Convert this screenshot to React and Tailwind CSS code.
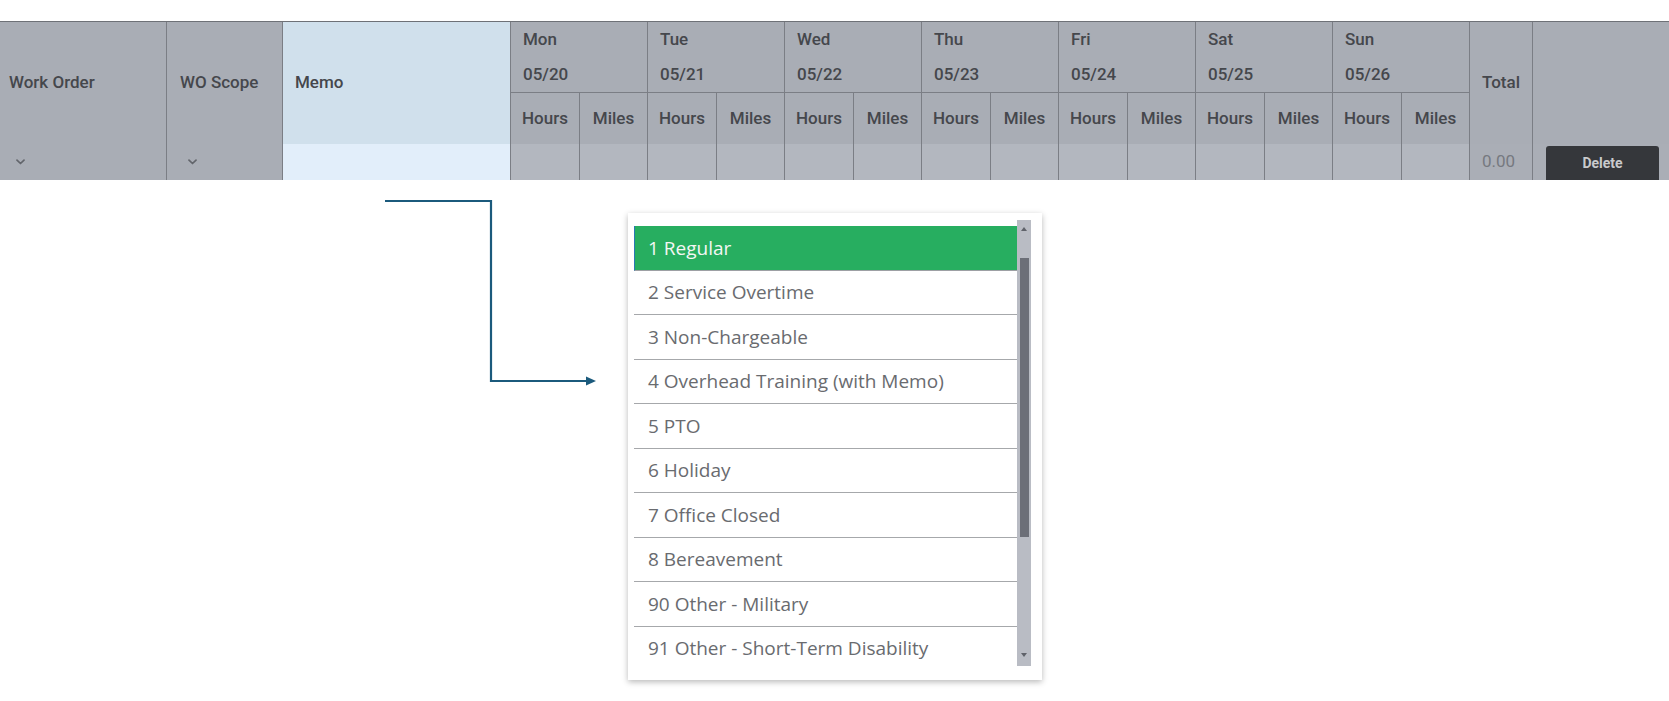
import React from "react";

const days = [
  { name: "Mon", date: "05/20" },
  { name: "Tue", date: "05/21" },
  { name: "Wed", date: "05/22" },
  { name: "Thu", date: "05/23" },
  { name: "Fri", date: "05/24" },
  { name: "Sat", date: "05/25" },
  { name: "Sun", date: "05/26" },
];

const payTypes = [
  "1 Regular",
  "2 Service Overtime",
  "3 Non-Chargeable",
  "4 Overhead Training (with Memo)",
  "5 PTO",
  "6 Holiday",
  "7 Office Closed",
  "8 Bereavement",
  "90 Other - Military",
  "91 Other - Short-Term Disability",
];

const Chevron = () => (
  <svg width="9" height="6" viewBox="0 0 9 6" fill="none">
    <path d="M1 1.2l3.5 3.3L8 1.2" stroke="#62656b" strokeWidth="1.7" strokeLinecap="round" strokeLinejoin="round" />
  </svg>
);

const cell = "border-r border-[#7b7e85]";

const TimesheetGrid = () => (
  <div
    className="mt-[21px] border-t border-[#6e7177] grid grid-cols-[167px_116px_228px_repeat(7,69px_68px)_63px_1fr] grid-rows-[71px_51px_36px] text-[17px] text-[#45474c] font-medium"
    style={{ fontFamily: "Roboto, 'Liberation Sans', sans-serif" }}
  >
    <div className={`${cell} row-span-2 bg-[#a9adb5] flex items-center pl-[9px]`}>Work Order</div>
    <div className={`${cell} row-span-2 bg-[#a9adb5] flex items-center pl-[13px]`}>WO Scope</div>
    <div className={`${cell} row-span-2 bg-[#d0e0ec] flex items-center pl-3`}>Memo</div>
    {days.map((d) => (
      <div key={d.name} className={`${cell} col-span-2 bg-[#a9adb5] border-b pl-3 leading-[35px]`}>
        <div>{d.name}</div>
        <div>{d.date}</div>
      </div>
    ))}
    <div className={`${cell} row-span-2 bg-[#a9adb5] flex items-center justify-center`}>Total</div>
    <div className="row-span-2 bg-[#a9adb5]" />

    {days.map((d) => (
      <React.Fragment key={d.name + "-sub"}>
        <div className={`${cell} bg-[#a9adb5] flex items-center justify-center`}>Hours</div>
        <div className={`${cell} bg-[#a9adb5] flex items-center justify-center`}>Miles</div>
      </React.Fragment>
    ))}

    <div className={`${cell} bg-[#a9adb5] flex items-center pl-[16px]`}>
      <Chevron />
    </div>
    <div className={`${cell} bg-[#a9adb5] flex items-center pl-[21px]`}>
      <Chevron />
    </div>
    <div className={`${cell} bg-[#e2eefa]`} />
    {days.map((d) => (
      <React.Fragment key={d.name + "-val"}>
        <div className={`${cell} bg-[#b3b7bf]`} />
        <div className={`${cell} bg-[#b3b7bf]`} />
      </React.Fragment>
    ))}
    <div className={`${cell} bg-[#aaaeb6] flex items-center pl-3 font-normal text-[#767980]`}>0.00</div>
    <div className="bg-[#aaaeb6] flex items-end pl-[13px]">
      <button className="w-[113px] h-[34px] bg-[#35373b] rounded-t-[3px] text-[#c9cacc] text-[14px] font-bold">
        Delete
      </button>
    </div>
  </div>
);

const Connector = () => (
  <svg width="212" height="190" viewBox="0 0 212 190" className="ml-[385px] mt-[20px] shrink-0">
    <path d="M0 1H106V181H202" fill="none" stroke="#1b5a7c" strokeWidth="2.2" />
    <path d="M201 176.5L211 181L201 185.5Z" fill="#1b5a7c" />
  </svg>
);

const PayTypeList = () => (
  <div
    className="ml-[31px] mt-[33px] w-[414px] bg-white shadow-[0_2px_6px_rgba(0,0,0,0.28)] flex pl-[6px] pr-[11px] pt-[7px] pb-[13px]"
    style={{ fontFamily: "'Open Sans', 'Noto Sans', sans-serif" }}
  >
    <div className="w-[383px] h-[441px] overflow-hidden mt-[6px]">
      {payTypes.map((p, i) => (
        <div
          key={p}
          className={
            i === 0
              ? "h-[44.5px] flex items-center pl-[13px] bg-[#27ae60] text-[#f4f7f4] text-[19px] border-l border-[#2a78b4] border-b border-b-[#9da0a4]"
              : "h-[44.5px] flex items-center pl-[14px] text-[#696b6f] text-[19px] border-b border-[#a6a8ab]"
          }
        >
          {p}
        </div>
      ))}
    </div>
    <div className="w-[14px] h-[446px] bg-[#b9bcc4] flex flex-col items-center">
      <div className="h-[38px] w-full flex justify-center pt-[7px]">
        <div className="w-0 h-0 border-l-[3px] border-r-[3px] border-b-[4px] border-l-transparent border-r-transparent border-b-[#5f626a]" />
      </div>
      <div className="w-[9px] h-[279px] bg-[#6c6f78]" />
      <div className="flex-1" />
      <div className="pb-[9px]">
        <div className="w-0 h-0 border-l-[3px] border-r-[3px] border-t-[4px] border-l-transparent border-r-transparent border-t-[#5f626a]" />
      </div>
    </div>
  </div>
);

export default function App() {
  return (
    <div className="w-[1669px] h-[701px] bg-white overflow-hidden">
      <TimesheetGrid />
      <div className="flex items-start">
        <Connector />
        <PayTypeList />
      </div>
    </div>
  );
}
